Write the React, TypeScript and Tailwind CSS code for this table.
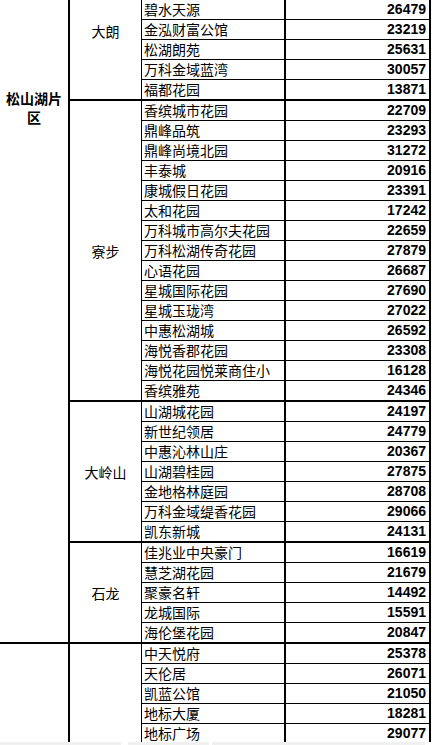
const sections: { label: string; top?: boolean; open?: boolean; rows: [string, number][] }[] = [
  {
    label: '大朗',
    top: true,
    rows: [
      ['碧水天源', 26479],
      ['金泓财富公馆', 23219],
      ['松湖朗苑', 25631],
      ['万科金域蓝湾', 30057],
      ['福都花园', 13871],
    ],
  },
  {
    label: '寮步',
    rows: [
      ['香缤城市花园', 22709],
      ['鼎峰品筑', 23293],
      ['鼎峰尚境北园', 31272],
      ['丰泰城', 20916],
      ['康城假日花园', 23391],
      ['太和花园', 17242],
      ['万科城市高尔夫花园', 22659],
      ['万科松湖传奇花园', 27879],
      ['心语花园', 26687],
      ['星城国际花园', 27690],
      ['星城玉珑湾', 27022],
      ['中惠松湖城', 26592],
      ['海悦香郡花园', 23308],
      ['海悦花园悦莱商住小', 16128],
      ['香缤雅苑', 24346],
    ],
  },
  {
    label: '大岭山',
    rows: [
      ['山湖城花园', 24197],
      ['新世纪领居', 24779],
      ['中惠沁林山庄', 20367],
      ['山湖碧桂园', 27875],
      ['金地格林庭园', 28708],
      ['万科金域缇香花园', 29066],
      ['凯东新城', 24131],
    ],
  },
  {
    label: '石龙',
    rows: [
      ['佳兆业中央豪门', 16619],
      ['慧芝湖花园', 21679],
      ['聚豪名轩', 14492],
      ['龙城国际', 15591],
      ['海伦堡花园', 20847],
    ],
  },
  {
    label: '',
    open: true,
    rows: [
      ['中天悦府', 25378],
      ['天伦居', 26071],
      ['凯蓝公馆', 21050],
      ['地标大厦', 18281],
      ['地标广场', 29077],
    ],
  },
];

const cjk = "font-['Microsoft_YaHei','Noto_Sans_CJK_SC',sans-serif]";

export default function App() {
  return (
    <div className="h-[745px] w-[434px] overflow-hidden bg-white flex flex-col text-black">
      <div className="h-[742px] overflow-hidden">
        <div className="flex w-[431px]">
          {/* area column */}
          <div className="w-[70px] shrink-0 border-r-2 border-black flex flex-col">
            <div className={`h-[644px] border-b-2 border-black pt-[89px] px-[2px] text-center text-[14px] leading-[19px] font-bold ${cjk}`}>
              松山湖片区
            </div>
            <div className="flex-1" />
          </div>

          <div className="flex-1 flex flex-col">
            {sections.map((s, si) => (
              <div key={si} className={`flex ${s.open ? '' : 'border-b-2 border-black'}`}>
                <div
                  className={`w-[72px] shrink-0 border-r border-black flex justify-center text-[14px] leading-[20px] ${cjk} ${
                    s.top ? 'items-start pt-[21px]' : 'items-center'
                  }`}
                >
                  {s.label}
                </div>
                <div className="flex-1 flex flex-col">
                  {s.rows.map(([name, price], ri) => {
                    const last = ri === s.rows.length - 1 && !s.open;
                    return (
                      <div
                        key={ri}
                        className={`flex ${last ? 'h-[19px]' : 'h-[20px] border-b border-black'}`}
                      >
                        <div
                          className={`w-[144px] shrink-0 border-r-2 border-black pl-[2px] text-[14px] leading-[19px] whitespace-nowrap overflow-hidden ${cjk}`}
                        >
                          {name}
                        </div>
                        <div className="w-[145px] shrink-0 border-r-2 border-black pr-[3px] text-right text-[14px] leading-[19px] font-bold font-['Liberation_Sans',Arial,sans-serif]">
                          {price}
                        </div>
                      </div>
                    );
                  })}
                </div>
              </div>
            ))}
          </div>
        </div>
      </div>

      {/* bottom strip */}
      <div className="h-[3px] flex gap-0">
        <div className="w-[121px] bg-[#f0f0f0]" />
        <div className="w-[7px]" />
        <div className="w-[81px] bg-[#f0f0f0]" />
        <div className="w-[3px]" />
        <div className="w-[213px] bg-[#f0f0f0]" />
      </div>
    </div>
  );
}
